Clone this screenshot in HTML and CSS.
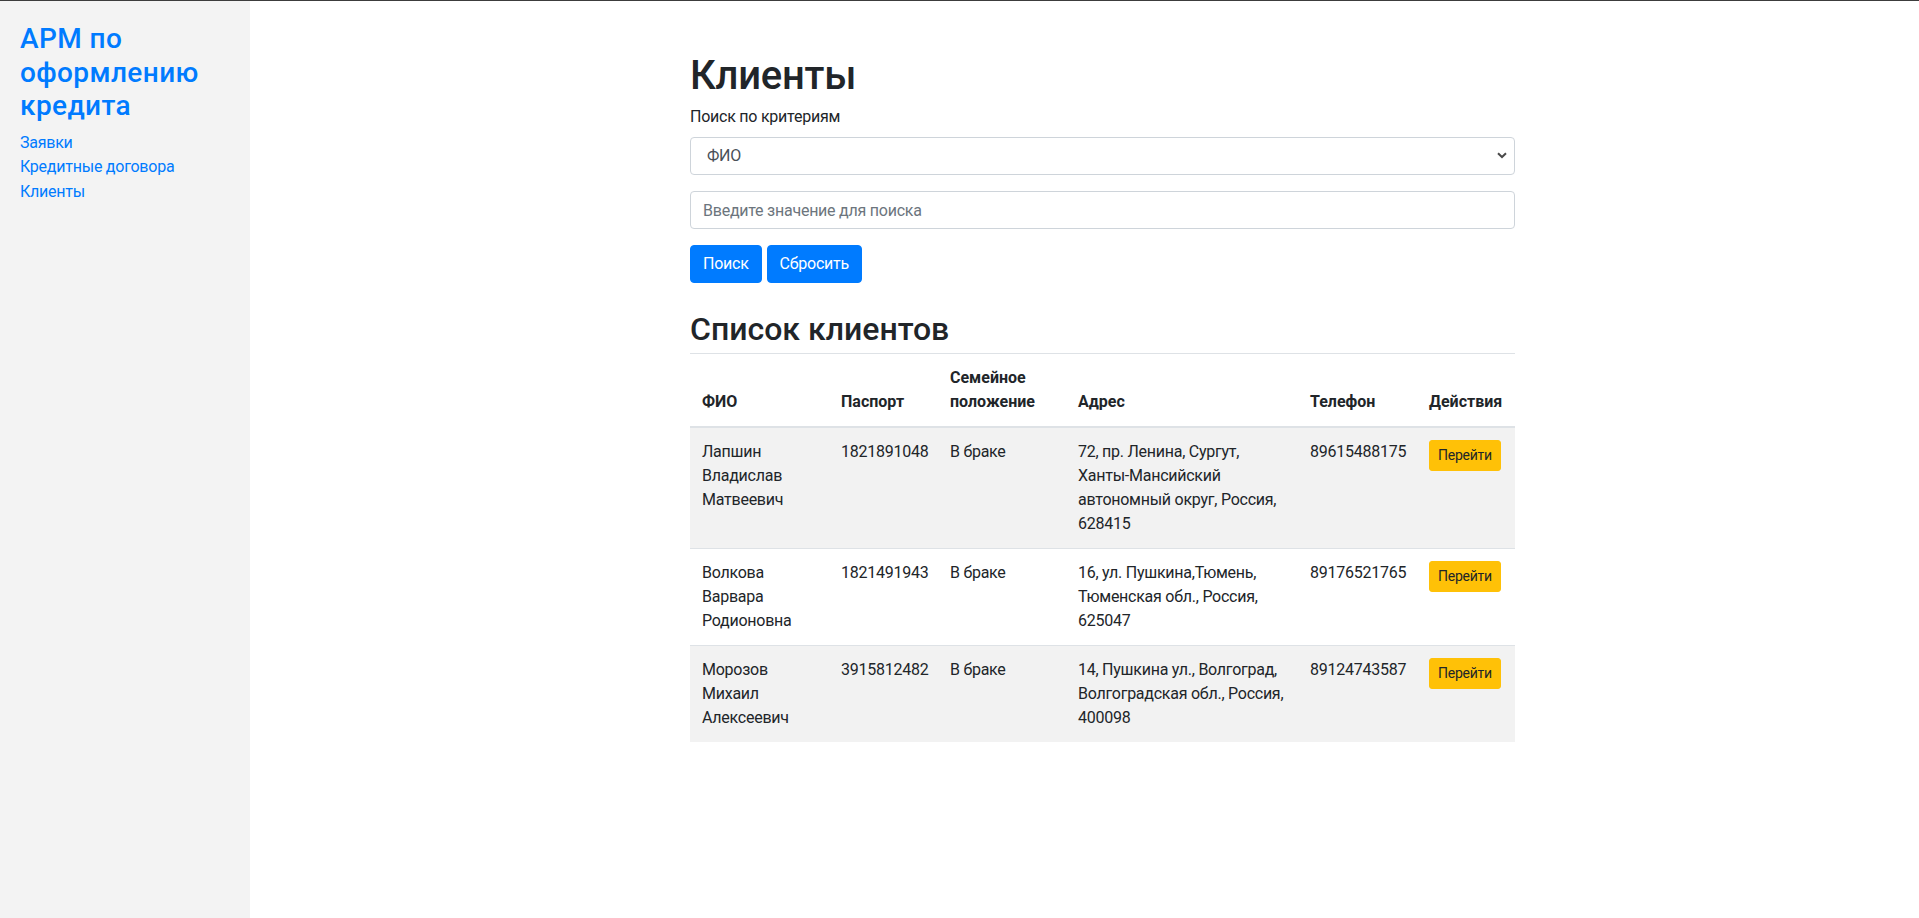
FILE: index.html
```html
<!DOCTYPE html>
<html lang="ru">
<head>
<meta charset="utf-8">
<title>Клиенты</title>
<link rel="stylesheet" href="styles.css">
</head>
<body>
<div class="layout">
  <aside class="sidebar">
    <div class="brand">АРМ по оформлению кредита</div>
    <nav class="nav">
      <a href="#">Заявки</a>
      <a href="#">Кредитные договора</a>
      <a href="#">Клиенты</a>
    </nav>
  </aside>
  <main class="main">
    <div class="content">
      <h1 class="page-title">Клиенты</h1>
      <form class="search-form">
        <div class="form-group">
          <label class="form-label">Поиск по критериям</label>
          <div class="select-wrap">
            <select class="form-control form-select">
              <option>ФИО</option>
              <option>Паспорт</option>
              <option>Телефон</option>
            </select>
            <svg class="select-arrow" width="10" height="7" viewBox="0 0 10 7"><path d="M1 1.2 L5 5 L9 1.2" fill="none" stroke="#4a4a4a" stroke-width="2"/></svg>
          </div>
        </div>
        <div class="form-group">
          <input class="form-control" type="text" placeholder="Введите значение для поиска">
        </div>
        <div class="btn-row">
          <button type="button" class="btn btn-primary">Поиск</button>
          <button type="button" class="btn btn-primary">Сбросить</button>
        </div>
      </form>
      <h2 class="section-title">Список клиентов</h2>
      <table class="table">
        <colgroup>
          <col class="c-fio"><col class="c-pass"><col class="c-fam"><col class="c-addr"><col class="c-phone"><col class="c-act">
        </colgroup>
        <thead>
          <tr>
            <th>ФИО</th>
            <th>Паспорт</th>
            <th>Семейное положение</th>
            <th>Адрес</th>
            <th>Телефон</th>
            <th>Действия</th>
          </tr>
        </thead>
        <tbody>
          <tr class="odd">
            <td>Лапшин Владислав Матвеевич</td>
            <td>1821891048</td>
            <td>В браке</td>
            <td>72, пр. Ленина, Сургут, Ханты-Мансийский автономный округ, Россия, 628415</td>
            <td>89615488175</td>
            <td><button type="button" class="btn btn-warning btn-sm">Перейти</button></td>
          </tr>
          <tr>
            <td>Волкова Варвара Родионовна</td>
            <td>1821491943</td>
            <td>В браке</td>
            <td>16, ул. Пушкина,Тюмень, Тюменская обл., Россия, 625047</td>
            <td>89176521765</td>
            <td><button type="button" class="btn btn-warning btn-sm">Перейти</button></td>
          </tr>
          <tr class="odd">
            <td>Морозов Михаил Алексеевич</td>
            <td>3915812482</td>
            <td>В браке</td>
            <td>14, Пушкина ул., Волгоград, Волгоградская обл., Россия, 400098</td>
            <td>89124743587</td>
            <td><button type="button" class="btn btn-warning btn-sm">Перейти</button></td>
          </tr>
        </tbody>
      </table>
    </div>
  </main>
</div>
</body>
</html>
```

FILE: styles.css
```css
* { box-sizing: border-box; }

html, body {
  margin: 0;
  padding: 0;
}

body {
  font-family: Roboto, "Liberation Sans", Arial, sans-serif;
  font-size: 16px;
  line-height: 1.5;
  letter-spacing: -0.015em;
  color: #212529;
  background: #fff;
  border-top: 1px solid #3c3c3c;
}

.layout {
  display: grid;
  grid-template-columns: 250px 1fr;
  min-height: calc(100vh - 1px);
}

.sidebar {
  background: #f3f3f3;
  padding: 21px 20px;
}

.brand {
  font-size: 28px;
  line-height: 1.2;
  font-weight: 500;
  letter-spacing: 0.4px;
  color: #007bff;
  margin-bottom: 8px;
}

.nav {
  display: flex;
  flex-direction: column;
}

.nav a {
  color: #007bff;
  text-decoration: none;
  line-height: 24.5px;
}

.main {
  padding: 48px 0 0 440px;
}

.content {
  width: 825px;
}

.page-title {
  font-size: 40px;
  font-weight: 500;
  line-height: 1.2;
  padding-top: 3px;
  margin: 0 0 5px;
}

.form-group {
  margin-bottom: 16px;
}

.form-label {
  display: block;
  margin-bottom: 8px;
  padding-top: 1px;
  margin-top: -1px;
}

.form-control {
  display: block;
  width: 100%;
  height: 38px;
  padding: 6px 12px;
  font: inherit;
  font-size: 16px;
  line-height: 1.5;
  letter-spacing: inherit;
  color: #495057;
  background: #fff;
  border: 1px solid #ced4da;
  border-radius: 4px;
  outline: none;
}

.form-control::placeholder {
  color: #6c757d;
}

.select-wrap {
  position: relative;
}

.form-select {
  appearance: none;
  -webkit-appearance: none;
  padding-left: 16px;
}

.select-arrow {
  position: absolute;
  right: 8px;
  top: 15px;
  pointer-events: none;
}

.btn-row {
  display: flex;
  gap: 5px;
  margin-bottom: 24px;
}

.btn {
  font: inherit;
  font-size: 16px;
  line-height: 1.5;
  letter-spacing: inherit;
  padding: 6px 12px;
  border: 1px solid transparent;
  border-radius: 4px;
  cursor: pointer;
}

.btn-primary {
  background: #007bff;
  border-color: #007bff;
  color: #fff;
}

.btn-warning {
  background: #ffc107;
  border-color: #ffc107;
  color: #212529;
}

.btn-sm {
  font-size: 14px;
  line-height: 1.5;
  padding: 4px 8px;
  border-radius: 3px;
}

.section-title {
  font-size: 32px;
  font-weight: 500;
  line-height: 1.2;
  letter-spacing: 0;
  padding-top: 3px;
  margin: 0 0 5px;
}

.table {
  width: 825px;
  table-layout: fixed;
  border-collapse: collapse;
  color: #212529;
}

.c-fio { width: 139px; }
.c-pass { width: 109px; }
.c-fam { width: 128px; }
.c-addr { width: 232px; }
.c-phone { width: 119px; }
.c-act { width: 98px; }

.table th,
.table td {
  padding: 12px;
  text-align: left;
  vertical-align: top;
  border-top: 1px solid #dee2e6;
}

.table td {
  letter-spacing: -0.25px;
}

.table thead th {
  vertical-align: bottom;
  border-bottom: 2px solid #dee2e6;
  font-weight: 700;
  letter-spacing: 0;
}

.table thead tr:first-child th {
  border-top: 1px solid #dee2e6;
}

.table tbody tr:first-child td {
  border-top: none;
}

.table tbody tr.odd {
  background: #f2f2f2;
}
```
